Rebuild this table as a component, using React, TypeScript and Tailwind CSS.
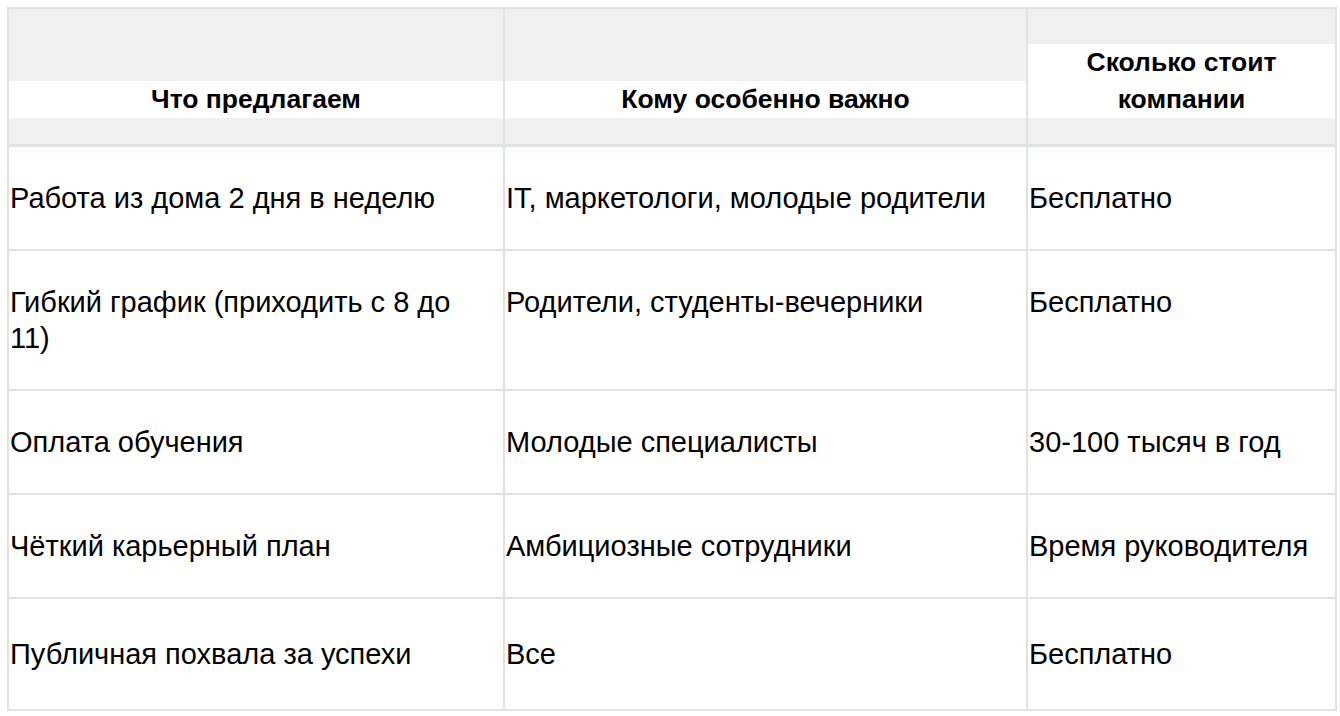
const rows: [string, string, string][] = [
  ['Работа из дома 2 дня в неделю', 'IT, маркетологи, молодые родители', 'Бесплатно'],
  ['Гибкий график (приходить с 8 до 11)', 'Родители, студенты-вечерники', 'Бесплатно'],
  ['Оплата обучения', 'Молодые специалисты', '30-100 тысяч в год'],
  ['Чёткий карьерный план', 'Амбициозные сотрудники', 'Время руководителя'],
  ['Публичная похвала за успехи', 'Все', 'Бесплатно'],
];

const headers = ['Что предлагаем', 'Кому особенно важно', 'Сколько стоит компании'];

export default function App() {
  return (
    <div className="min-h-screen bg-white p-[7px] font-['Liberation_Sans',Arial,sans-serif] text-black">
      <table className="w-[1328px] table-fixed border-collapse border-2 border-[#e1e2e3]">
        <colgroup>
          <col className="w-[496px]" />
          <col className="w-[523px]" />
          <col className="w-[309px]" />
        </colgroup>
        <thead>
          <tr className="border-b-[3px] border-[#e1e2e3]">
            {headers.map((h) => (
              <th
                key={h}
                className="border-x-2 border-[#e1e2e3] bg-[#f0f0f0] px-0 pt-[35px] pb-[26px] align-bottom"
              >
                <div className="bg-white px-6 text-center text-[26.5px] font-bold leading-[37px]">{h}</div>
              </th>
            ))}
          </tr>
        </thead>
        <tbody>
          {rows.map((r, ri) => (
            <tr key={r[0]} className="border-b-2 border-[#e1e2e3]">
              {r.map((c, i) => (
                <td
                  key={i}
                  className={
                    'border-x-2 border-[#e1e2e3] pl-[1px] pr-2 align-top text-[29px] leading-[36px] ' +
                    (ri === rows.length - 1 ? 'pt-[37px] pb-[37px]' : 'py-[33px]')
                  }
                >
                  {c}
                </td>
              ))}
            </tr>
          ))}
        </tbody>
      </table>
    </div>
  );
}
